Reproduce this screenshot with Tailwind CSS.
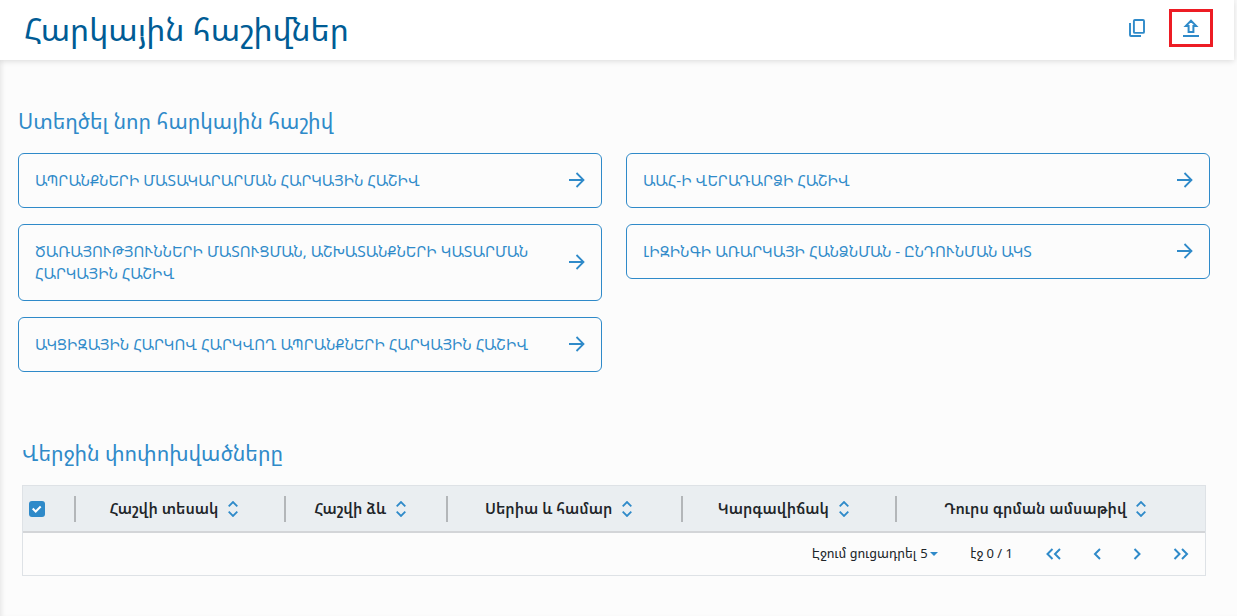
<!DOCTYPE html>
<html lang="hy">
<head>
<meta charset="utf-8">
<meta name="viewport" content="width=device-width, initial-scale=1">
<title>Հարկային հաշիվներ</title>
<script src="https://cdn.jsdelivr.net/npm/@tailwindcss/browser@4"></script>
</head>
<body class="min-h-screen bg-[#fcfcfc] font-['Noto_Sans','Noto_Sans_Armenian','DejaVu_Sans',sans-serif] text-[#212529] shadow-[inset_4px_0_4px_-2px_rgba(0,0,0,0.08)]">
<svg class="hidden" aria-hidden="true">
  <symbol id="arrow" viewBox="0 0 16 16"><path d="M0 8h15M7.5 1l7 7-7 7" fill="none" stroke="currentColor" stroke-width="1.8"/></symbol>
  <symbol id="sort" viewBox="0 0 10 16"><path d="M.7 5.3L5 1l4.3 4.3M.7 10.7L5 15l4.3-4.3" fill="none" stroke="currentColor" stroke-width="1.8"/></symbol>
</svg>
<header class="mr-[3px] flex h-[60px] items-center justify-between bg-white pr-[21px] pl-6 shadow-[0_1px_6px_rgba(0,0,0,0.14)]">
  <h1 class="pb-0.5 text-[32px] leading-10 text-[#005c95]">Հարկային հաշիվներ</h1>
  <div class="flex items-center gap-[22px] pb-1 text-[#2f8ac9]">
    <button type="button" aria-label="Պատճենել" class="flex h-[38px] w-5 items-center justify-center">
      <svg class="h-[18px] w-4" viewBox="0 0 16 18" fill="none" stroke="currentColor" stroke-width="1.9"><rect x="4.9" y="1" width="10.1" height="12.9" rx="1"/><path d="M1 4v12q0 1 1 1h10"/></svg>
    </button>
    <button type="button" aria-label="Բեռնել" class="flex h-[38px] w-11 items-center justify-center border-3 border-[#ed1c24]">
      <svg class="h-[18px] w-4" viewBox="0 0 16 18" fill="none" stroke="currentColor" stroke-width="2"><path d="M8 1.6L13.2 7H10.4V13H5.6V7H2.8z"/><path d="M0 17h16"/></svg>
    </button>
  </div>
</header>
<main class="pt-[45px]">
  <section class="pr-[27px] pl-[18px]">
    <h2 class="text-[21px] leading-8 text-[#2f8ac9]">Ստեղծել նոր հարկային հաշիվ</h2>
    <div class="mt-4 grid grid-cols-2 items-start gap-6 text-[15px] text-[#2f8ac9]">
      <div class="flex flex-col gap-4">
        <a href="#goods" class="flex items-center justify-between gap-6 rounded-md border border-[#2f8ac9] px-4 pt-[15px] pb-4 leading-[22px]"><span>ԱՊՐԱՆՔՆԵՐԻ ՄԱՏԱԿԱՐԱՐՄԱՆ ՀԱՐԿԱՅԻՆ ՀԱՇԻՎ</span><svg class="size-4 shrink-0"><use href="#arrow"/></svg></a>
        <a href="#services" class="flex items-center justify-between gap-6 rounded-md border border-[#2f8ac9] px-4 pt-[15px] pb-4 leading-[22px]"><span>ԾԱՌԱՅՈՒԹՅՈՒՆՆԵՐԻ ՄԱՏՈՒՑՄԱՆ, ԱՇԽԱՏԱՆՔՆԵՐԻ ԿԱՏԱՐՄԱՆ ՀԱՐԿԱՅԻՆ ՀԱՇԻՎ</span><svg class="size-4 shrink-0"><use href="#arrow"/></svg></a>
        <a href="#excise" class="flex items-center justify-between gap-6 rounded-md border border-[#2f8ac9] px-4 pt-[15px] pb-4 leading-[22px]"><span>ԱԿՑԻԶԱՅԻՆ ՀԱՐԿՈՎ ՀԱՐԿՎՈՂ ԱՊՐԱՆՔՆԵՐԻ ՀԱՐԿԱՅԻՆ ՀԱՇԻՎ</span><svg class="size-4 shrink-0"><use href="#arrow"/></svg></a>
      </div>
      <div class="flex flex-col gap-4">
        <a href="#vat" class="flex items-center justify-between gap-6 rounded-md border border-[#2f8ac9] px-4 pt-[15px] pb-4 leading-[22px]"><span>ԱԱՀ-Ի ՎԵՐԱԴԱՐՁԻ ՀԱՇԻՎ</span><svg class="size-4 shrink-0"><use href="#arrow"/></svg></a>
        <a href="#leasing" class="flex items-center justify-between gap-6 rounded-md border border-[#2f8ac9] px-4 pt-[15px] pb-4 leading-[22px]"><span>ԼԻԶԻՆԳԻ ԱՌԱՐԿԱՅԻ ՀԱՆՁՆՄԱՆ - ԸՆԴՈՒՆՄԱՆ ԱԿՏ</span><svg class="size-4 shrink-0"><use href="#arrow"/></svg></a>
      </div>
    </div>
  </section>
  <section class="mt-[65px] pr-[31px] pl-[22px]">
    <h2 class="text-[21px] leading-8 text-[#2f8ac9]">Վերջին փոփոխվածները</h2>
    <div class="mt-4 border border-[#dee2e6] text-[13px]">
      <table class="w-full table-fixed border-collapse">
        <colgroup><col class="w-[4.3%]"><col class="w-[17.8%]"><col class="w-[13.7%]"><col class="w-[19.9%]"><col class="w-[18.1%]"><col></colgroup>
        <thead class="border-b-2 border-[#d3d5d8] bg-[#eaeef1]">
          <tr class="h-[46px]">
            <th class="pl-1.5 text-left">
              <label class="relative block size-4"><input type="checkbox" checked aria-label="Ընտրել բոլորը" class="block size-4 appearance-none rounded-[3px] bg-[#2f8ac9]"><svg class="pointer-events-none absolute inset-0 size-4" viewBox="0 0 16 16" fill="none" stroke="white" stroke-width="2"><path d="M3.7 7.5l3 3 5-5"/></svg></label>
            </th>
            <th class="p-0"><div class="flex h-[26px] items-center justify-center border-l-2 border-[#b3b6b9] pr-3"><button type="button" class="flex items-center gap-2.5 text-[15px] font-semibold whitespace-nowrap">Հաշվի տեսակ<svg class="h-4 w-2.5 text-[#2f8ac9]"><use href="#sort"/></svg></button></div></th>
            <th class="p-0"><div class="flex h-[26px] items-center justify-center border-l-2 border-[#b3b6b9] pr-3"><button type="button" class="flex items-center gap-2.5 text-[15px] font-semibold whitespace-nowrap">Հաշվի ձև<svg class="h-4 w-2.5 text-[#2f8ac9]"><use href="#sort"/></svg></button></div></th>
            <th class="p-0"><div class="flex h-[26px] items-center justify-center border-l-2 border-[#b3b6b9] pr-3"><button type="button" class="flex items-center gap-2.5 text-[15px] font-semibold whitespace-nowrap">Սերիա և համար<svg class="h-4 w-2.5 text-[#2f8ac9]"><use href="#sort"/></svg></button></div></th>
            <th class="p-0"><div class="flex h-[26px] items-center justify-center border-l-2 border-[#b3b6b9] pr-3"><button type="button" class="flex items-center gap-2.5 text-[15px] font-semibold whitespace-nowrap">Կարգավիճակ<svg class="h-4 w-2.5 text-[#2f8ac9]"><use href="#sort"/></svg></button></div></th>
            <th class="p-0"><div class="flex h-[26px] items-center justify-center border-l-2 border-[#b3b6b9] pr-3"><button type="button" class="flex items-center gap-2.5 text-[15px] font-semibold whitespace-nowrap">Դուրս գրման ամսաթիվ<svg class="h-4 w-2.5 text-[#2f8ac9]"><use href="#sort"/></svg></button></div></th>
          </tr>
        </thead>
      </table>
      <div class="flex h-[42px] items-center justify-end pr-4">
        <div class="flex items-center gap-1">
          <label for="size">Էջում ցուցադրել</label>
          <div class="relative flex items-center">
            <select id="size" class="w-[18px] appearance-none bg-transparent p-0"><option>5</option></select>
            <svg class="pointer-events-none absolute right-0 h-1 w-2 fill-[#2f8ac9]" viewBox="0 0 8 4"><path d="M0 0h8L4 4z"/></svg>
          </div>
        </div>
        <span class="ml-8">էջ 0 / 1</span>
        <nav aria-label="Էջեր" class="ml-8 flex items-center text-[#2f8ac9]">
          <button type="button" aria-label="Առաջին" class="w-4"><svg class="h-3 w-4" viewBox="0 0 16 12" fill="none" stroke="currentColor" stroke-width="2"><path d="M7.5 1l-5 5 5 5M15 1l-5 5 5 5"/></svg></button>
          <button type="button" aria-label="Նախորդ" class="ml-8 w-2"><svg class="h-3 w-2" viewBox="0 0 8 12" fill="none" stroke="currentColor" stroke-width="2"><path d="M7 1L2 6l5 5"/></svg></button>
          <button type="button" aria-label="Հաջորդ" class="ml-8 w-2"><svg class="h-3 w-2" viewBox="0 0 8 12" fill="none" stroke="currentColor" stroke-width="2"><path d="M1.5 1l5 5-5 5"/></svg></button>
          <button type="button" aria-label="Վերջին" class="ml-8 w-4"><svg class="h-3 w-4" viewBox="0 0 16 12" fill="none" stroke="currentColor" stroke-width="2"><path d="M1.5 1l5 5-5 5M9 1l5 5-5 5"/></svg></button>
        </nav>
      </div>
    </div>
  </section>
</main>
</body>
</html>
